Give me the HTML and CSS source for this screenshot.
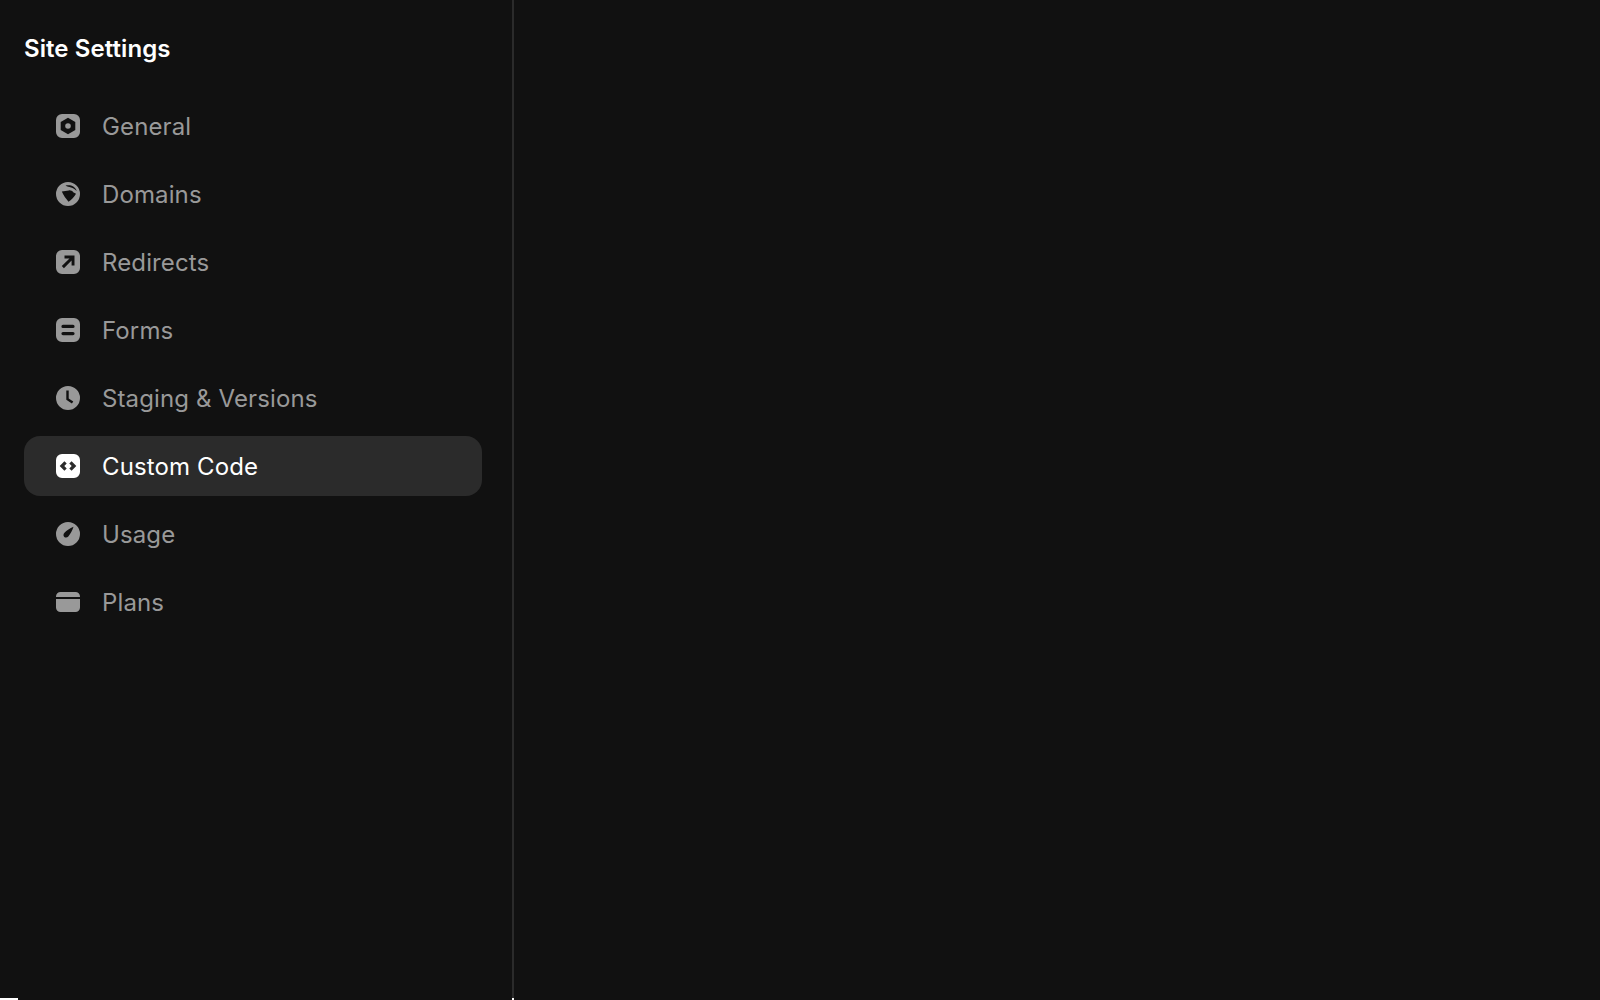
FILE: index.html
```html
<!doctype html>
<html lang="en-US">
<head>
	<meta charset="utf-8">
	<title>Site Settings</title>
	<link rel="stylesheet" href="styles.css">
</head>
<body>
	<div class="app">
		<aside class="side">
			<h1>Site Settings</h1>
			<nav class="menu">
				<a href="#" class="item">
					<svg class="ico" viewBox="0 0 24 24"><path fill-rule="evenodd" d="M6 0h12a6 6 0 0 1 6 6v12a6 6 0 0 1-6 6H6a6 6 0 0 1-6-6V6a6 6 0 0 1 6-6zM12 3.800 4.700 8v8l7.300 4.200 7.300-4.200V8zM12 9.200a2.800 2.800 0 1 1 0 5.600 2.800 2.800 0 0 1 0-5.600z"/></svg>
					<span>General</span>
				</a>
				<a href="#" class="item">
					<svg class="ico" viewBox="0 0 24 24"><path fill-rule="evenodd" d="M12 0a12 12 0 1 1 0 24 12 12 0 0 1 0-24zM5.800 9.600l7-1.200c2-.2 3.400.6 4.400 1.800l2.800 1.500c-1.500 3-4.800 6.200-7.500 8-2.600-2.900-5-6.100-6.700-10.100zM9.500 3.600c2.600-.8 5.800-.6 7.800 1 1.700 1.200 2.900 2.600 3.300 4.400-1.700-1.500-3.500-2.800-5.600-3.400-1.900-.6-3.800-.9-5.500-2z"/></svg>
					<span>Domains</span>
				</a>
				<a href="#" class="item">
					<svg class="ico" viewBox="0 0 24 24"><path fill-rule="evenodd" d="M6 0h12a6 6 0 0 1 6 6v12a6 6 0 0 1-6 6H6a6 6 0 0 1-6-6V6a6 6 0 0 1 6-6zM8.500 5.500v2.900h5L5.800 16.100 7.900 18.200 15.600 10.500v5h2.900V5.500z"/></svg>
					<span>Redirects</span>
				</a>
				<a href="#" class="item">
					<svg class="ico" viewBox="0 0 24 24"><path fill-rule="evenodd" d="M6 0h12a6 6 0 0 1 6 6v12a6 6 0 0 1-6 6H6a6 6 0 0 1-6-6V6a6 6 0 0 1 6-6zM7 6.800a1.600 1.600 0 0 0 0 3.200h10a1.600 1.600 0 0 0 0-3.200zM7 14a1.600 1.600 0 0 0 0 3.200h10a1.600 1.600 0 0 0 0-3.200z"/></svg>
					<span>Forms</span>
				</a>
				<a href="#" class="item">
					<svg class="ico" viewBox="0 0 24 24"><path fill-rule="evenodd" d="M12 0a12 12 0 1 1 0 24 12 12 0 0 1 0-24zM10.300 4.500v9.200l5.600 3.900 1.400-2-4.600-3.200V4.500z"/></svg>
					<span>Staging &amp; Versions</span>
				</a>
				<a href="#" class="item on">
					<svg class="ico" viewBox="0 0 24 24"><path fill-rule="evenodd" d="M6 0h12a6 6 0 0 1 6 6v12a6 6 0 0 1-6 6H6a6 6 0 0 1-6-6V6a6 6 0 0 1 6-6zM8.400 7.300 3.700 12l4.700 4.700 2.300-2.300L8.300 12l2.400-2.400zM15.600 7.300 13.300 9.600 15.700 12l-2.400 2.400 2.300 2.300L20.300 12z"/></svg>
					<span>Custom Code</span>
				</a>
				<a href="#" class="item">
					<svg class="ico" viewBox="0 0 24 24"><path fill-rule="evenodd" d="M12 0a12 12 0 1 1 0 24 12 12 0 0 1 0-24zM17.500 4.800c-3.600 1.400-6.900 3.700-9 6-1.300 1.400-1.300 3.100-.2 4.100 1.200 1 2.900.8 4-.5 2.300-2.700 4-5.900 5.200-9.600z"/></svg>
					<span>Usage</span>
				</a>
				<a href="#" class="item">
					<svg class="ico" viewBox="0 0 24 24"><path d="M0 6.500a4.500 4.500 0 0 1 4.500-4.500h15a4.500 4.500 0 0 1 4.500 4.500V7H0zM0 9h24v8.500a4.500 4.500 0 0 1-4.500 4.500h-15A4.500 4.500 0 0 1 0 17.500z"/></svg>
					<span>Plans</span>
				</a>
			</nav>
		</aside>
		<main class="main"></main>
	</div>
	<b class="nick nick-a"></b>
	<b class="nick nick-b"></b>
</body>
</html>
```

FILE: styles.css
```css
html,body{height:100%}
body{margin:0;background:#111;color:#fff;font-family:Inter,"Liberation Sans",sans-serif;overflow:hidden}
.app{display:flex;height:100%}
.side{flex:0 0 514px;box-sizing:border-box;padding:0 30px 0 24px;border-right:2px solid #2b2b2b}
.side h1{margin:0;padding:34px 0 32px;font-size:24px;line-height:30px;font-weight:600;letter-spacing:.08px}
.menu{display:flex;flex-direction:column;gap:8px}
.item{display:flex;align-items:center;gap:22px;height:60px;padding-left:32px;border-radius:16px;color:#999;font-size:24px;letter-spacing:.12px;text-decoration:none}
.item .ico{flex:none;width:24px;height:24px;fill:currentColor}
.item.on{background:#2b2b2b;color:#fff}
.main{flex:1}
.nick{position:absolute;bottom:0;height:2px;background:#fff}
.nick-a{left:0;width:18px}
.nick-b{left:512px;width:2px}
```
